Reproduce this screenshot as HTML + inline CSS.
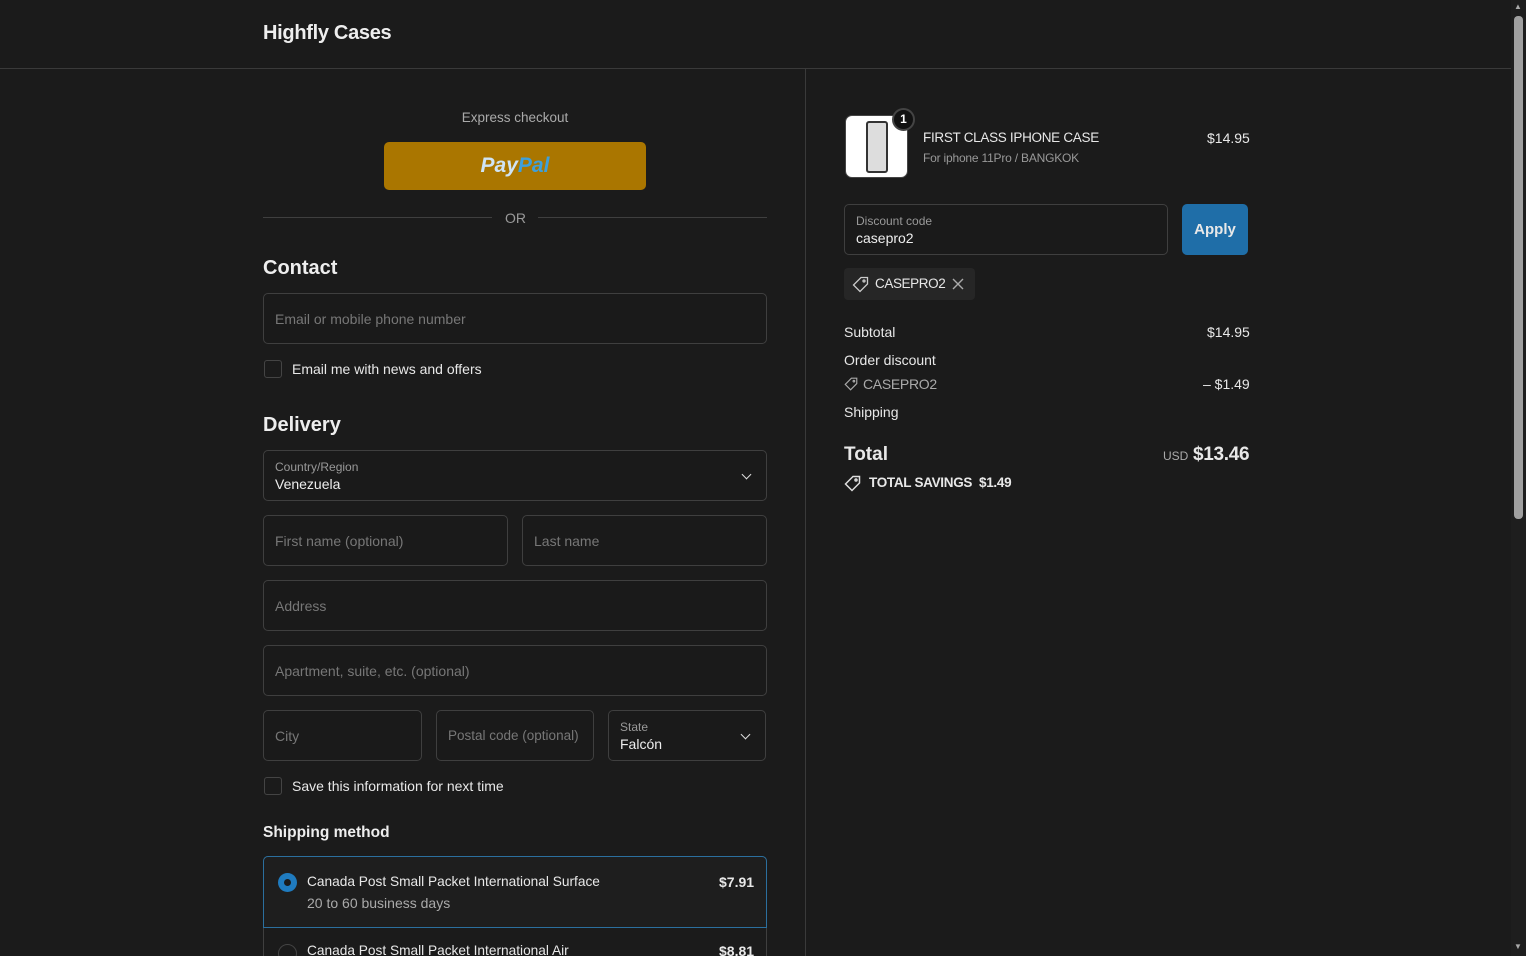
<!DOCTYPE html>
<html><head><meta charset="utf-8"><style>
*{box-sizing:border-box;margin:0;padding:0}
html,body{width:1526px;height:956px;overflow:hidden}
body{background:#1b1b1b;font-family:"Liberation Sans",sans-serif;color:#e8e8e8;position:relative;font-size:14px}
.a{position:absolute}
.in{position:absolute;border:1px solid #3f3f3f;border-radius:5px;background:#1a1a1a}
.ph{position:absolute;left:11px;top:17px;color:#777;font-size:14px}
.lbl{position:absolute;left:11px;top:9px;color:#999;font-size:12px}
.val{position:absolute;left:11px;top:25px;color:#eee;font-size:14px}
h2{position:absolute;font-size:20px;font-weight:bold;color:#eee}
.cb{position:absolute;width:18px;height:18px;border:1px solid #444;border-radius:3px}
.chev{position:absolute;right:16px;top:20px;width:7px;height:7px;border-right:1.5px solid #ddd;border-bottom:1.5px solid #ddd;transform:rotate(45deg)}
</style></head><body>
<div class="a" style="left:263px;top:22px;font-size:20px;font-weight:bold;color:#eee;letter-spacing:-0.3px">Highfly Cases</div>
<div class="a" style="left:0;top:68px;width:1511px;height:1px;background:#3a3a3a"></div>
<div class="a" style="left:805px;top:69px;width:1px;height:887px;background:#3a3a3a"></div>
<div class="a" style="left:1511px;top:0;width:15px;height:956px;background:#1e1e1e"></div>
<div class="a" style="left:1514px;top:16px;width:9px;height:503px;background:#a0a0a0;border-radius:4px"></div>
<div class="a" style="left:1514px;top:2px;font-size:8px;color:#aaa">▲</div>
<div class="a" style="left:1514px;top:942px;font-size:8px;color:#aaa">▼</div>

<div class="a" style="left:263px;top:110px;width:504px;text-align:center;color:#aaa;font-size:13.5px">Express checkout</div>
<div class="a" style="left:384px;top:142px;width:262px;height:48px;background:#aa7600;border-radius:5px;text-align:center;line-height:48px;font-size:21px;font-weight:bold;font-style:italic"><span style="color:#cfe4f5">Pay</span><span style="color:#3ea0da">Pal</span></div>
<div class="a" style="left:263px;top:217px;width:229px;height:1px;background:#3f3f3f"></div>
<div class="a" style="left:538px;top:217px;width:229px;height:1px;background:#3f3f3f"></div>
<div class="a" style="left:505px;top:210px;color:#999;font-size:14px">OR</div>

<h2 style="left:263px;top:257px">Contact</h2>
<div class="in" style="left:263px;top:293px;width:504px;height:51px"><span class="ph">Email or mobile phone number</span></div>
<div class="cb" style="left:264px;top:360px"></div>
<div class="a" style="left:292px;top:361px">Email me with news and offers</div>

<h2 style="left:263px;top:414px">Delivery</h2>
<div class="in" style="left:263px;top:450px;width:504px;height:51px"><span class="lbl">Country/Region</span><span class="val">Venezuela</span><span class="chev"></span></div>
<div class="in" style="left:263px;top:515px;width:245px;height:51px"><span class="ph">First name (optional)</span></div>
<div class="in" style="left:522px;top:515px;width:245px;height:51px"><span class="ph">Last name</span></div>
<div class="in" style="left:263px;top:580px;width:504px;height:51px"><span class="ph">Address</span></div>
<div class="in" style="left:263px;top:645px;width:504px;height:51px"><span class="ph">Apartment, suite, etc. (optional)</span></div>
<div class="in" style="left:263px;top:710px;width:159px;height:51px"><span class="ph">City</span></div>
<div class="in" style="left:436px;top:710px;width:158px;height:51px"><span class="ph" style="font-size:13.5px">Postal code (optional)</span></div>
<div class="in" style="left:608px;top:710px;width:158px;height:51px"><span class="lbl">State</span><span class="val">Falcón</span><span class="chev"></span></div>
<div class="cb" style="left:264px;top:777px"></div>
<div class="a" style="left:292px;top:778px">Save this information for next time</div>

<div class="a" style="left:263px;top:824px;font-size:15.5px;font-weight:bold;color:#eee">Shipping method</div>
<div class="a" style="left:263px;top:856px;width:504px;height:110px;border:1px solid #3f3f3f;border-radius:5px"></div>
<div class="a" style="left:263px;top:856px;width:504px;height:72px;border:1px solid #2b6f9e;border-radius:5px 5px 0 0;background:#1e1e1e"></div>
<div class="a" style="left:278px;top:873px;width:19px;height:19px;border-radius:50%;background:#1f7bbf"><div style="margin:6px;width:7px;height:7px;border-radius:50%;background:#1b1b1b"></div></div>
<div class="a" style="left:307px;top:874px;font-size:13.7px">Canada Post Small Packet International Surface</div>
<div class="a" style="left:307px;top:895px;color:#aaa">20 to 60 business days</div>
<div class="a" style="left:719px;top:874px;font-weight:bold">$7.91</div>
<div class="a" style="left:278px;top:944px;width:19px;height:19px;border-radius:50%;border:1px solid #444"></div>
<div class="a" style="left:307px;top:943px;font-size:13.7px">Canada Post Small Packet International Air</div>
<div class="a" style="left:719px;top:943px;font-weight:bold">$8.81</div>

<div class="a" style="left:845px;top:115px;width:63px;height:63px;background:#fff;border:1px solid #444;border-radius:7px"><div style="margin:5px 20px;width:22px;height:52px;background:#ddd;border:2px solid #333;border-radius:3px"></div></div>
<div class="a" style="left:892px;top:108px;width:23px;height:23px;border-radius:50%;background:#111;border:2px solid #444;color:#fff;font-size:12px;text-align:center;line-height:19px;font-weight:bold">1</div>
<div class="a" style="left:923px;top:130px;font-size:13.5px;letter-spacing:-0.3px">FIRST CLASS IPHONE CASE</div>
<div class="a" style="left:923px;top:151px;font-size:12px;color:#999;letter-spacing:-0.2px">For iphone 11Pro / BANGKOK</div>
<div class="a" style="left:1207px;top:130px">$14.95</div>

<div class="in" style="left:844px;top:204px;width:324px;height:51px"><span class="lbl">Discount code</span><span class="val">casepro2</span></div>
<div class="a" style="left:1182px;top:204px;width:66px;height:51px;background:#1f6ea8;border-radius:5px;text-align:center;line-height:51px;font-weight:bold;font-size:15px">Apply</div>
<div class="a" style="left:844px;top:268px;width:131px;height:32px;background:#262626;border-radius:4px"></div>
<svg class="a" style="left:852px;top:276px" width="17" height="17" viewBox="0 0 17 17" fill="none" stroke="#ccc" stroke-width="1.3"><path d="M9 1.5h6.5v6.5l-7.5 7.5-6.5-6.5z"/><circle cx="12" cy="5" r="1"/></svg>
<div class="a" style="left:875px;top:276px;font-size:13.5px;letter-spacing:-0.4px">CASEPRO2</div>
<svg class="a" style="left:952px;top:278px" width="12" height="12" viewBox="0 0 12 12" stroke="#aaa" stroke-width="1.4"><path d="M1 1l10 10M11 1L1 11"/></svg>

<div class="a" style="left:844px;top:324px">Subtotal</div><div class="a" style="left:1207px;top:324px">$14.95</div>
<div class="a" style="left:844px;top:352px">Order discount</div>
<svg class="a" style="left:844px;top:377px" width="14" height="14" viewBox="0 0 17 17" fill="none" stroke="#aaa" stroke-width="1.4"><path d="M9 1.5h6.5v6.5l-7.5 7.5-6.5-6.5z"/><circle cx="12" cy="5" r="1"/></svg>
<div class="a" style="left:863px;top:376px;color:#aaa;letter-spacing:-0.3px">CASEPRO2</div>
<div class="a" style="left:1203px;top:376px">– $1.49</div>
<div class="a" style="left:844px;top:404px">Shipping</div>
<div class="a" style="left:844px;top:444px;font-size:19px;font-weight:bold">Total</div>
<div class="a" style="left:1163px;top:449px;font-size:12px;color:#aaa">USD</div>
<div class="a" style="left:1193px;top:444px;font-size:19px;font-weight:bold;letter-spacing:-0.3px">$13.46</div>
<svg class="a" style="left:844px;top:475px" width="17" height="17" viewBox="0 0 17 17" fill="none" stroke="#ddd" stroke-width="1.5"><path d="M9 1.5h6.5v6.5l-7.5 7.5-6.5-6.5z"/><circle cx="12" cy="5" r="1"/></svg>
<div class="a" style="left:869px;top:475px;font-weight:bold;font-size:13.5px;letter-spacing:-0.3px">TOTAL SAVINGS&nbsp; $1.49</div>
</body></html>
